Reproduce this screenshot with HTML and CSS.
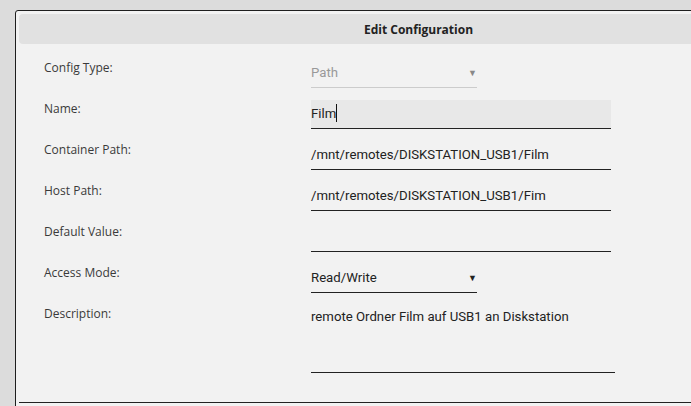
FILE: index.html
```html
<!DOCTYPE html>
<html>
<head>
	<title>Edit Configuration</title>
	<link rel="stylesheet" href="styles.css">
</head>
<body>
	<div class="dialog">
		<div class="dialog-title">Edit Configuration</div>

		<form class="config-form">
			<div class="row">
				<label class="label">Config Type:</label>
				<div class="field">
					<div class="select disabled">
						<span class="value">Path</span>
						<span class="arrow">&#9660;</span>
					</div>
				</div>
			</div>

			<div class="row">
				<label class="label">Name:</label>
				<div class="field">
					<div class="input focused">Film<span class="caret"></span></div>
				</div>
			</div>

			<div class="row">
				<label class="label">Container Path:</label>
				<div class="field">
					<div class="input">/mnt/remotes/DISKSTATION_USB1/Film</div>
				</div>
			</div>

			<div class="row">
				<label class="label">Host Path:</label>
				<div class="field">
					<div class="input">/mnt/remotes/DISKSTATION_USB1/Fim</div>
				</div>
			</div>

			<div class="row">
				<label class="label">Default Value:</label>
				<div class="field">
					<div class="input"></div>
				</div>
			</div>

			<div class="row">
				<label class="label">Access Mode:</label>
				<div class="field">
					<div class="select">
						<span class="value">Read/Write</span>
						<span class="arrow">&#9660;</span>
					</div>
				</div>
			</div>

			<div class="row">
				<label class="label">Description:</label>
				<div class="field">
					<div class="textarea">remote Ordner Film auf USB1 an Diskstation</div>
				</div>
			</div>
		</form>

		<div class="divider"></div>
	</div>
</body>
</html>
```

FILE: styles.css
```css
	html, body {
		margin: 0;
		height: 100%;
		overflow: hidden;
	}
	body {
		background-color: #dcdcdc;
		font-family: "Open Sans", "Noto Sans", sans-serif;
		color: #333;
	}
	.dialog {
		width: 799px;
		margin: 10px 0 0 15px;
		border: 1px solid #1e1e1e;
		border-radius: 3px 3px 0 0;
		background-color: #f2f2f2;
		padding: 3px;
		min-height: 420px;
	}
	.dialog-title {
		height: 30px;
		line-height: 31px;
		text-align: center;
		background-color: #e1e1e1;
		border-radius: 4px;
		font-size: 12px;
		font-weight: 700;
		color: #222;
	}
	.config-form {
		padding: 15px 0 0 25px;
	}
	.row {
		display: flex;
		align-items: flex-start;
		margin-bottom: 12px;
	}
	.label {
		width: 267px;
		line-height: 18px;
		font-size: 12px;
		color: #3a3a3a;
	}
	.field {
		font-family: Roboto, "Liberation Sans", sans-serif;
		font-size: 13.2px;
		color: #222;
	}

	.input {
		position: relative;
		width: 300px;
		height: 28px;
		line-height: 28px;
		border-bottom: 1px solid #222;
	}
	.input.focused {
		background-color: #e8e8e8;
	}
	.caret {
		position: absolute;
		top: 4px;
		width: 1px;
		height: 18px;
		background-color: #111;
	}

	.select {
		position: relative;
		width: 166px;
		height: 28px;
		line-height: 28px;
		border-bottom: 1px solid #222;
	}
	.select .arrow {
		position: absolute;
		right: 0;
		top: 0;
		font-size: 9px;
		color: #222;
	}
	.select.disabled {
		color: #999;
		border-bottom-color: #ccc;
	}
	.select.disabled .arrow {
		color: #888;
	}

	.textarea {
		width: 304px;
		height: 65px;
		padding-top: 2px;
		line-height: 20px;
		border-bottom: 1px solid #222;
	}

	.divider {
		margin-top: 29px;
		border-top: 1px solid #222;
	}
```
